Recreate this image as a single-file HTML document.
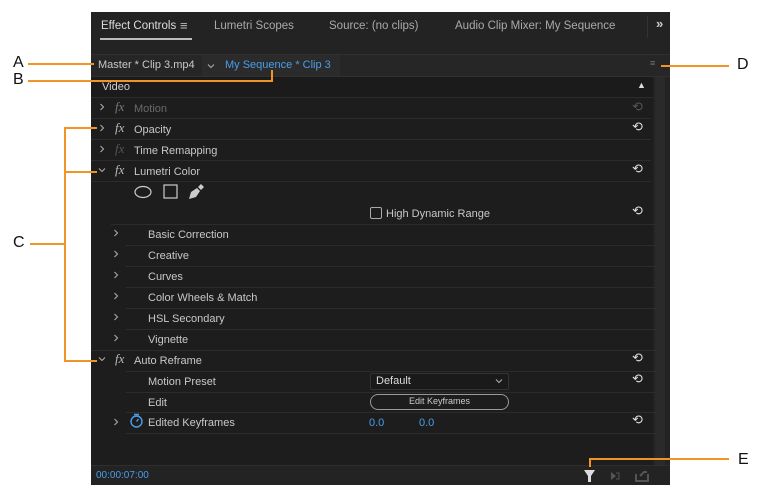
<!DOCTYPE html>
<html><head><style>
*{margin:0;padding:0;box-sizing:border-box}
body{width:760px;height:499px;background:#fff;position:relative;font-family:"Liberation Sans",sans-serif;overflow:hidden}
.p{position:absolute;left:91px;top:12px;width:579px;height:473px;background:#232323}
.a{position:absolute}
.t{position:absolute;font-size:11px;color:#c8c8c8;white-space:nowrap}
.row{position:absolute;left:0;width:560px;height:21px;border-bottom:1px solid #2c2c2c}
.o{position:absolute;background:#f29423}
.lbl{position:absolute;font-size:16px;color:#111}
.chev{position:absolute;width:8px;height:8px}
.fx{position:absolute;font-family:"Liberation Serif",serif;font-style:italic;font-size:13px;color:#bbb}
</style></head><body>
<svg width="0" height="0" style="position:absolute"><defs>
<symbol id="r" viewBox="0 0 8 8"><path d="M2.5 1 L5.5 4 L2.5 7" fill="none" stroke="#aaa" stroke-width="1.1"/></symbol>
<symbol id="d" viewBox="0 0 8 8"><path d="M1 2.5 L4 5.5 L7 2.5" fill="none" stroke="#aaa" stroke-width="1.1"/></symbol>
</defs></svg>
<div class="p">
 <div class="t" style="left:10px;top:8px;font-size:11.5px;color:#ddd">Effect Controls</div>
 <div class="t" style="left:89px;top:6px;font-size:13px;color:#bbb">≡</div>
 <div class="a" style="left:9px;top:26px;width:92px;height:2px;background:#bbb"></div>
 <div class="t" style="left:123px;top:8px;font-size:11.5px;color:#aaa">Lumetri Scopes</div>
 <div class="t" style="left:238px;top:8px;font-size:11.5px;color:#aaa">Source: (no clips)</div>
 <div class="t" style="left:364px;top:8px;font-size:11.5px;color:#aaa">Audio Clip Mixer: My Sequence</div>
 <div class="a" style="left:556px;top:4px;width:1px;height:22px;background:#333"></div>
 <div class="t" style="left:565px;top:4px;font-size:13px;color:#ccc;font-weight:bold">»</div>
 <div class="a" style="left:0;top:42px;width:579px;height:23px;background:#262626;border-top:1px solid #303030;border-bottom:1px solid #303030"></div>
 <div class="t" style="left:7px;top:47px;color:#c8c8c8">Master * Clip 3.mp4</div>
 <div class="a" style="left:111px;top:43px;width:138px;height:21px;background:#2b2b2b"></div>
 <svg class="chev" style="left:116px;top:50px"><use href="#d"/></svg>
 <div class="t" style="left:134px;top:47px;color:#4a9eea">My Sequence * Clip 3</div>
 <div class="t" style="left:559px;top:46px;color:#777;font-size:9px">≡</div>
 <div class="a" style="left:0;top:65px;width:562px;height:388px;background:#1d1d1d"></div>
 <div class="a" style="left:564px;top:65px;width:10px;height:388px;background:#2a2a2a"></div>
 <div class="row" style="top:65px;width:562px;background:#1b1b1b"></div>
 <div class="t" style="left:11px;top:69px;color:#d0d0d0">Video</div>
 <div class="t" style="left:546px;top:68px;color:#ddd;font-size:9px">▲</div>

 <div class="row" style="top:86px"></div>
 <svg class="chev" style="left:7px;top:91px"><use href="#r"/></svg><div class="fx" style="left:24px;top:87px;color:#777">fx</div>
 <div class="t" style="left:43px;top:91px;color:#6a6a6a">Motion</div>
 <div class="row" style="top:107px"></div>
 <svg class="chev" style="left:7px;top:112px"><use href="#r"/></svg><div class="fx" style="left:24px;top:108px">fx</div>
 <div class="t" style="left:43px;top:112px">Opacity</div>
 <div class="row" style="top:128px"></div>
 <svg class="chev" style="left:7px;top:133px"><use href="#r"/></svg><div class="fx" style="left:24px;top:129px;color:#555">fx</div>
 <div class="t" style="left:43px;top:133px">Time Remapping</div>
 <div class="row" style="top:149px"></div>
 <svg class="chev" style="left:7px;top:154px"><use href="#d"/></svg><div class="fx" style="left:24px;top:150px">fx</div>
 <div class="t" style="left:43px;top:154px">Lumetri Color</div>
 <svg class="a" style="left:42px;top:171px" width="80" height="18"><ellipse cx="10" cy="9" rx="8" ry="5.5" fill="none" stroke="#ccc" stroke-width="1.2"/><rect x="31" y="2" width="13" height="13" fill="none" stroke="#ccc" stroke-width="1.2"/><path d="M56 16 L58 9 L64 5 L67 8 L63 14 Z M65 4 L68 1 L71 4 L68 7 Z" fill="#ccc"/></svg>
 <div class="a" style="left:279px;top:195px;width:12px;height:12px;border:1.5px solid #aaa;border-radius:2px"></div>
 <div class="t" style="left:295px;top:196px">High Dynamic Range</div>
 <div class="a" style="left:20px;top:212px;width:545px;height:1px;background:#2c2c2c"></div>
 <div class="t" style="left:57px;top:217px">Basic Correction</div>
 <div class="t" style="left:57px;top:238px">Creative</div>
 <div class="t" style="left:57px;top:259px">Curves</div>
 <div class="t" style="left:57px;top:280px">Color Wheels &amp; Match</div>
 <div class="t" style="left:57px;top:301px">HSL Secondary</div>
 <div class="t" style="left:57px;top:322px">Vignette</div>
 <svg class="chev" style="left:21px;top:217px"><use href="#r"/></svg><svg class="chev" style="left:21px;top:238px"><use href="#r"/></svg><svg class="chev" style="left:21px;top:259px"><use href="#r"/></svg><svg class="chev" style="left:21px;top:280px"><use href="#r"/></svg><svg class="chev" style="left:21px;top:301px"><use href="#r"/></svg><svg class="chev" style="left:21px;top:322px"><use href="#r"/></svg>
 <div class="a" style="left:35px;top:233px;width:530px;height:1px;background:#2c2c2c"></div>
 <div class="a" style="left:35px;top:254px;width:530px;height:1px;background:#2c2c2c"></div>
 <div class="a" style="left:35px;top:275px;width:530px;height:1px;background:#2c2c2c"></div>
 <div class="a" style="left:35px;top:296px;width:530px;height:1px;background:#2c2c2c"></div>
 <div class="a" style="left:35px;top:317px;width:530px;height:1px;background:#2c2c2c"></div>
 <div class="a" style="left:0;top:338px;width:565px;height:1px;background:#2c2c2c"></div>
 <svg class="chev" style="left:7px;top:343px"><use href="#d"/></svg><div class="fx" style="left:24px;top:339px">fx</div>
 <div class="t" style="left:43px;top:343px">Auto Reframe</div>
 <div class="a" style="left:35px;top:359px;width:530px;height:1px;background:#2c2c2c"></div>
 <div class="t" style="left:57px;top:364px">Motion Preset</div>
 <div class="a" style="left:279px;top:361px;width:139px;height:17px;background:#1a1a1a;border:1px solid #333;border-radius:2px"></div>
 <div class="t" style="left:285px;top:363px;color:#ddd">Default</div>
 <svg class="chev" style="left:404px;top:365px"><use href="#d"/></svg>
 <div class="a" style="left:35px;top:380px;width:530px;height:1px;background:#2c2c2c"></div>
 <div class="t" style="left:57px;top:385px">Edit</div>
 <div class="a" style="left:279px;top:382px;width:139px;height:16px;border:1.5px solid #999;border-radius:8px"></div>
 <div class="t" style="left:318px;top:384px;font-size:9px;color:#ccc">Edit Keyframes</div>
 <div class="a" style="left:35px;top:400px;width:530px;height:1px;background:#2c2c2c"></div>
 <svg class="chev" style="left:21px;top:406px"><use href="#r"/></svg>
 <svg class="a" style="left:38px;top:401px" width="15" height="15"><circle cx="7.5" cy="8.5" r="5.5" fill="none" stroke="#4a9eea" stroke-width="1.4"/><path d="M5 1.5h5M7.5 8.5 L9.5 6" stroke="#4a9eea" stroke-width="1.4"/></svg>
 <div class="t" style="left:57px;top:405px">Edited Keyframes</div>
 <div class="t" style="left:278px;top:405px;color:#4a9eea">0.0</div>
 <div class="t" style="left:328px;top:405px;color:#4a9eea">0.0</div>
 <div class="a" style="left:35px;top:421px;width:530px;height:1px;background:#2c2c2c"></div>
 <div class="t" style="left:541px;top:87px;color:#555;font-size:13px">⟲</div>
 <div class="t" style="left:541px;top:107px;color:#ddd;font-size:13px">⟲</div>
 <div class="t" style="left:541px;top:149px;color:#ddd;font-size:13px">⟲</div>
 <div class="t" style="left:541px;top:191px;color:#ddd;font-size:13px">⟲</div>
 <div class="t" style="left:541px;top:338px;color:#ddd;font-size:13px">⟲</div>
 <div class="t" style="left:541px;top:359px;color:#ddd;font-size:13px">⟲</div>
 <div class="t" style="left:541px;top:400px;color:#ddd;font-size:13px">⟲</div>
 <div class="a" style="left:0;top:453px;width:579px;height:20px;background:#232323;border-top:1px solid #2e2e2e"></div>
 <div class="t" style="left:5px;top:458px;color:#4a9eea;font-size:10px">00:00:07:00</div>
 <svg class="a" style="left:491px;top:456px" width="70" height="15"><path d="M2 2h11l-4 6v6h-3v-6z" fill="#ddd"/><path d="M29 4v8l5-4z" fill="#555"/><path d="M34 5h3v6h-3" stroke="#555" fill="none"/><path d="M54 6v7h12v-7" stroke="#555" fill="none" stroke-width="2"/><path d="M58 8l4-4 3 0" stroke="#555" fill="none" stroke-width="2"/></svg>
</div>
<div class="lbl" style="left:13px;top:54px">A</div>
<div class="o" style="left:28px;top:63px;width:66px;height:2px"></div>
<div class="lbl" style="left:13px;top:71px">B</div>
<div class="o" style="left:28px;top:80px;width:245px;height:2px"></div>
<div class="o" style="left:271px;top:70px;width:2px;height:12px"></div>
<div class="lbl" style="left:13px;top:234px">C</div>
<div class="o" style="left:30px;top:243px;width:35px;height:2px"></div>
<div class="o" style="left:64px;top:127px;width:2px;height:235px"></div>
<div class="o" style="left:64px;top:127px;width:33px;height:2px"></div>
<div class="o" style="left:64px;top:171px;width:33px;height:2px"></div>
<div class="o" style="left:64px;top:360px;width:33px;height:2px"></div>
<div class="lbl" style="left:737px;top:56px">D</div>
<div class="o" style="left:661px;top:65px;width:68px;height:2px"></div>
<div class="lbl" style="left:738px;top:451px">E</div>
<div class="o" style="left:589px;top:458px;width:140px;height:2px"></div>
<div class="o" style="left:589px;top:458px;width:2px;height:9px"></div>
</body></html>
